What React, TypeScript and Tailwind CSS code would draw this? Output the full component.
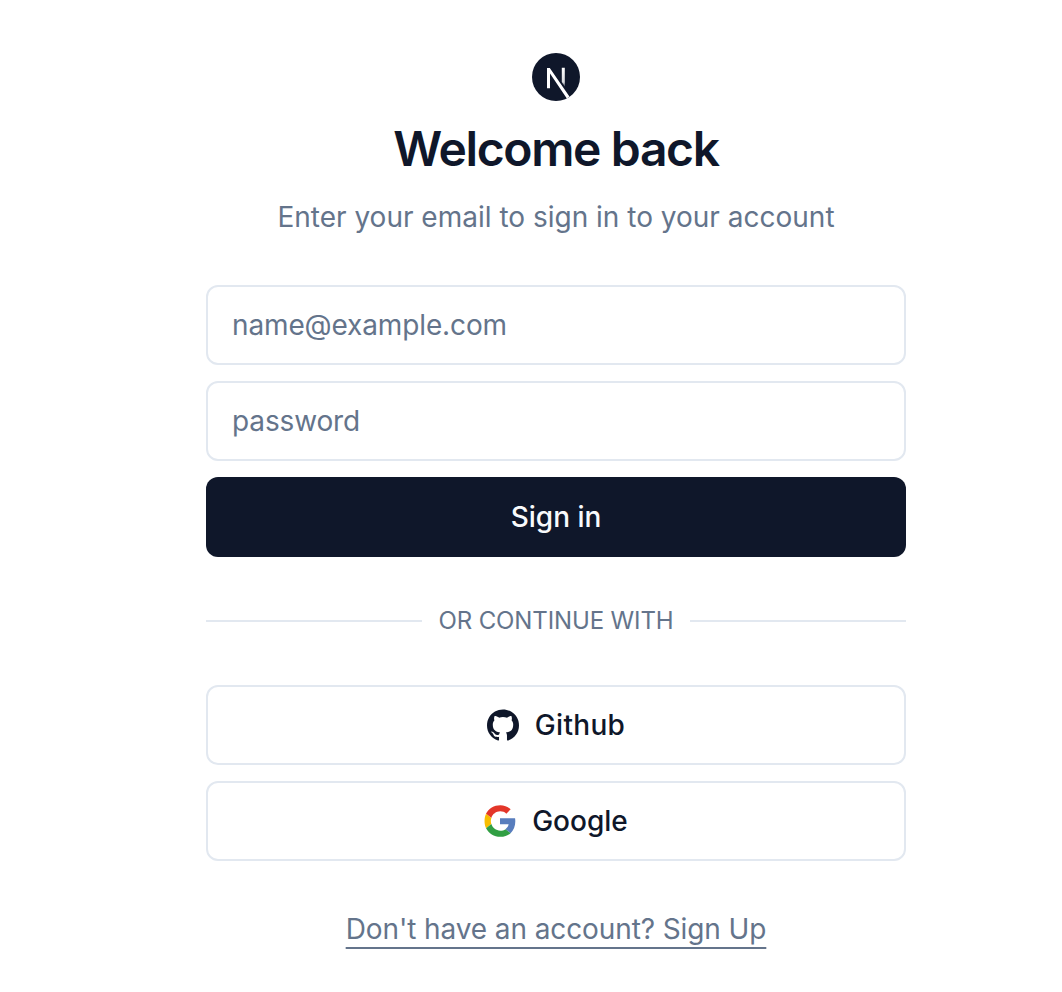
function NextLogo() {
  return (
    <svg viewBox="0 0 48 48" className="h-12 w-12" aria-hidden="true">
      <defs>
        <linearGradient id="bar" x1="0" y1="15" x2="0" y2="35" gradientUnits="userSpaceOnUse">
          <stop offset="0" stopColor="#fff" />
          <stop offset="0.7" stopColor="#fff" stopOpacity="0.85" />
          <stop offset="1" stopColor="#fff" stopOpacity="0.1" />
        </linearGradient>
        <clipPath id="disc">
          <circle cx="24" cy="24" r="24" />
        </clipPath>
      </defs>
      <circle cx="24" cy="24" r="24" fill="#0f172a" />
      <g clipPath="url(#disc)">
        <path d="M15 15h2.8L37.6 43.8 35 45.8 18 20.6V35.2H15z" fill="#fff" />
        <path d="M29.8 14.8h3v18.6l-3-4.3z" fill="url(#bar)" />
      </g>
    </svg>
  );
}

function GithubLogo() {
  return (
    <svg viewBox="0 0 438.549 438.549" className="h-8 w-8" aria-hidden="true">
      <path
        fill="currentColor"
        d="M409.132 114.573c-19.608-33.596-46.205-60.194-79.798-79.8-33.598-19.607-70.277-29.408-110.063-29.408-39.781 0-76.472 9.804-110.063 29.408-33.596 19.605-60.192 46.204-79.8 79.8C9.803 148.168 0 184.854 0 224.63c0 47.78 13.94 90.745 41.827 128.906 27.884 38.164 63.906 64.572 108.063 79.227 5.14.954 8.945.283 11.419-1.996 2.475-2.282 3.711-5.14 3.711-8.562 0-.571-.049-5.708-.144-15.417a2549.81 2549.81 0 01-.144-25.406l-6.567 1.136c-4.187.767-9.469 1.092-15.846 1-6.374-.089-12.991-.757-19.842-1.999-6.854-1.231-13.229-4.086-19.13-8.559-5.898-4.473-10.085-10.328-12.56-17.556l-2.855-6.57c-1.903-4.374-4.899-9.233-8.992-14.559-4.093-5.331-8.232-8.945-12.419-10.848l-1.999-1.431c-1.332-.951-2.568-2.098-3.711-3.429-1.142-1.331-1.997-2.663-2.568-3.997-.572-1.335-.098-2.43 1.427-3.289 1.525-.859 4.281-1.276 8.28-1.276l5.708.853c3.807.763 8.516 3.042 14.133 6.851 5.614 3.806 10.229 8.754 13.846 14.842 4.38 7.806 9.657 13.754 15.846 17.847 6.184 4.093 12.419 6.136 18.699 6.136 6.28 0 11.704-.476 16.274-1.423 4.565-.952 8.848-2.383 12.847-4.285 1.713-12.758 6.377-22.559 13.988-29.41-10.848-1.14-20.601-2.857-29.264-5.14-8.658-2.286-17.605-5.996-26.835-11.14-9.235-5.137-16.896-11.516-22.985-19.126-6.09-7.614-11.088-17.61-14.987-29.979-3.901-12.374-5.852-26.648-5.852-42.826 0-23.035 7.52-42.637 22.557-58.817-7.044-17.318-6.379-36.732 1.997-58.24 5.52-1.715 13.706-.428 24.554 3.853 10.85 4.283 18.794 7.952 23.84 10.994 5.046 3.041 9.089 5.618 12.135 7.708 17.705-4.947 35.976-7.421 54.818-7.421s37.117 2.474 54.823 7.421l10.849-6.849c7.419-4.57 16.18-8.758 26.262-12.565 10.088-3.805 17.802-4.853 23.134-3.138 8.562 21.509 9.325 40.922 2.279 58.24 15.036 16.18 22.559 35.787 22.559 58.817 0 16.178-1.958 30.497-5.853 42.966-3.9 12.471-8.941 22.457-15.125 29.979-6.191 7.521-13.901 13.85-23.131 18.986-9.232 5.14-18.182 8.85-26.84 11.136-8.662 2.286-18.415 4.004-29.263 5.146 9.894 8.562 14.842 22.077 14.842 40.539v60.237c0 3.422 1.19 6.279 3.572 8.562 2.379 2.279 6.136 2.95 11.276 1.995 44.163-14.653 80.185-41.062 108.068-79.226 27.88-38.161 41.825-81.126 41.825-128.906-.01-39.771-9.818-76.454-29.414-110.049z"
      />
    </svg>
  );
}

function GoogleLogo() {
  return (
    <svg viewBox="0 0 48 48" className="h-8 w-8" aria-hidden="true">
      <path fill="#e33629" d="M24.4 9.5c3.5 0 6.6 1.22 9.1 3.6l6.5-6.65C35.9 2.38 30.47.3 24.4.3 15.02.3 6.91 5.38 2.96 13.22l7.98 6.19C12.83 13.72 18.14 9.5 24.4 9.5z" />
      <path fill="#587dbd" d="M46.98 24.55c0-1.57-.15-3.09-.38-4.55H24v9.02h12.94c-.58 2.96-2.26 5.48-4.78 7.18l7.73 6c4.51-4.18 7.09-10.36 7.09-17.65z" />
      <path fill="#f8bd00" d="M11.03 28.59c-.48-1.45-.76-2.99-.76-4.59s.27-3.14.76-4.59l-7.98-6.19C1.5 16.46.8 20.12.8 24c0 3.88.7 7.54 2.26 10.78l7.97-6.19z" />
      <path fill="#319f43" d="M24.4 47.7c6.3 0 11.6-2.03 15.49-5.51l-7.73-6c-2.15 1.45-4.72 2.3-7.76 2.3-6.26 0-11.47-4.22-13.37-9.91l-7.98 6.19c3.95 7.85 11.97 12.93 21.35 12.93z" />
    </svg>
  );
}

const field = "h-20 w-full rounded-xl border-2 border-[#e2e8f0] bg-white px-6 text-[28px] leading-10 tracking-[-0.13px] text-[#64748b] placeholder:text-[#64748b] outline-none";
const social = "flex h-20 w-full items-center justify-center gap-4 rounded-xl border-2 border-[#e2e8f0] text-[28px] leading-10 font-medium text-[#0f172a]";

export default function App() {
  return (
    <main className="flex h-[992px] w-full justify-center bg-white pl-[50px] font-['Inter',sans-serif] antialiased">
      <div className="flex w-[700px] flex-col pt-[53px]">
        <div className="flex flex-col items-center">
          <NextLogo />
          <h1 className="mt-4 text-[48px] leading-[64px] font-semibold tracking-[-1.36px] whitespace-nowrap text-[#0f172a]">Welcome back</h1>
          <p className="mt-4 text-[28px] leading-10 whitespace-nowrap text-[#64748b]">Enter your email to sign in to your account</p>
        </div>
        <form className="mt-12 flex flex-col gap-4" onSubmit={(e) => e.preventDefault()}>
          <input className={field} type="email" placeholder="name@example.com" />
          <input className={field} type="password" placeholder="password" />
          <button className="h-20 w-full rounded-xl bg-[#0f172a] text-[28px] leading-10 font-medium text-[#f8fafc]">Sign in</button>
        </form>
        <div className="mt-12 flex h-8 items-center gap-4">
          <span className="h-0.5 flex-1 bg-[#e2e8f0]" />
          <span className="text-2xl leading-8 tracking-[-0.12px] text-[#64748b]">OR CONTINUE WITH</span>
          <span className="h-0.5 flex-1 bg-[#e2e8f0]" />
        </div>
        <div className="mt-12 flex flex-col gap-4">
          <button className={social}>
            <GithubLogo />
            <span className="tracking-[0.3px]">Github</span>
          </button>
          <button className={social}>
            <GoogleLogo />
            <span>Google</span>
          </button>
        </div>
        <p className="mt-12 text-center text-[28px] leading-10 tracking-[-0.1px] text-[#64748b]">
          <a className="underline underline-offset-8">Don't have an account? Sign Up</a>
        </p>
      </div>
    </main>
  );
}
